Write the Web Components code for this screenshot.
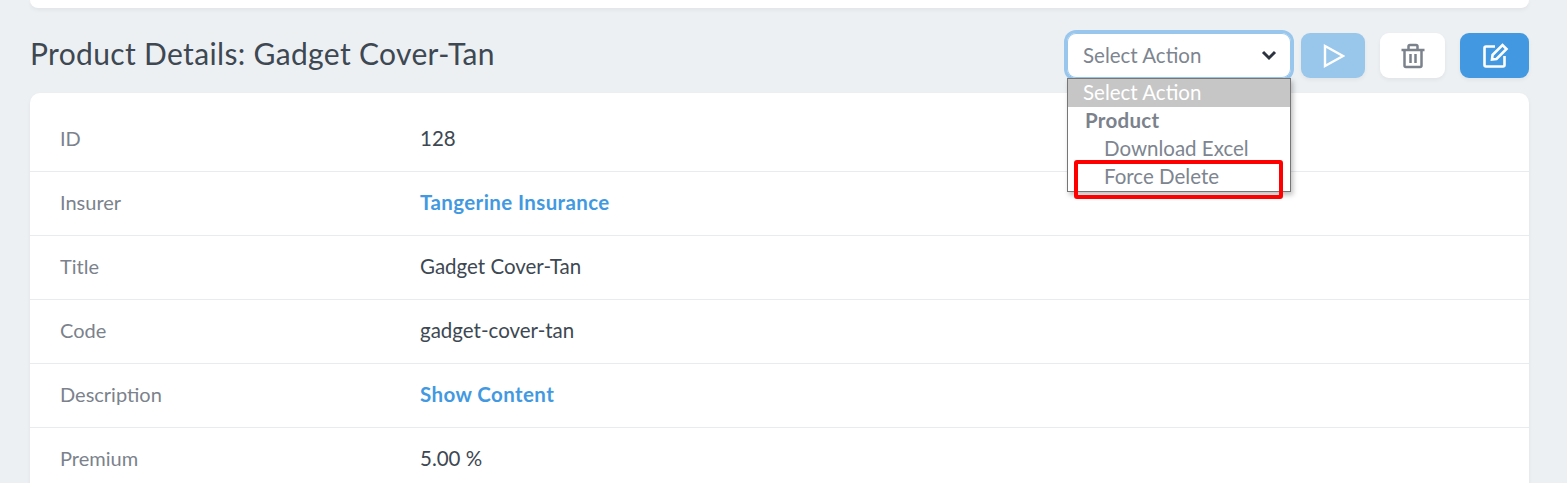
<!DOCTYPE html>
<html><head><meta charset="utf-8">
<style>
html,body{margin:0;height:483px;overflow:hidden;background:#edf0f3;}
body{font-family:Lato,"Noto Sans",sans-serif;font-size:20px;color:#3d4852;}
</style></head>
<body>
<template id="t-page"><style>
:host{display:block;padding:0 38px 0 30px;}
.top{height:8px;background:#fff;border-radius:0 0 10px 10px;box-shadow:0 2px 4px rgba(0,0,0,.05);}
</style><div class="top"></div><slot></slot></template>

<template id="t-head"><style>
:host{display:flex;justify-content:space-between;align-items:flex-start;height:85px;}
h1{margin:0;font-weight:400;font-size:30px;line-height:36px;color:#3d4852;letter-spacing:.34px;padding-top:27px;}
.acts{display:flex;align-items:flex-start;padding-top:25px;height:45px;}
</style><h1><slot name="title"></slot></h1><div class="acts"><slot></slot></div></template>

<template id="t-select"><style>
:host{display:block;position:relative;width:224px;height:45px;margin-right:10px;}
.box{box-sizing:border-box;height:45px;width:224px;background:#fff;border-radius:9px;box-shadow:0 0 0 3px #98c6ec,inset 0 0 0 1px #98c6ec;display:flex;align-items:center;justify-content:space-between;padding:0 14px 2px 16px;font-size:20.500px;color:#7d8590;}
.list{position:absolute;left:0;top:45px;width:224px;box-sizing:border-box;border:1px solid #767676;background:#fff;box-shadow:2px 3px 5px rgba(0,0,0,.25);font-size:20.500px;color:#7d8590;line-height:28px;z-index:2;}
.o{height:28px;padding-left:15px;white-space:nowrap;line-height:26px;}
.sel{background:#c6c6c6;color:#fff;}
.g{font-weight:700;padding-left:17px;color:#7b828c;letter-spacing:.3px;}
.i{padding-left:36px;}
.mark{position:absolute;left:7px;top:127px;width:209px;height:39px;box-sizing:border-box;border:4px solid #f00;border-radius:3px;z-index:3;}
</style><div class="box"><span>Select Action</span>
<svg width="16" height="12" viewBox="0 0 16 12"><path d="M2 3 8 9l6-6" fill="none" stroke="#2d3440" stroke-width="3"/></svg></div>
<div class="list"><div class="o sel">Select Action</div><div class="o g">Product</div><div class="o i">Download Excel</div><div class="o i">Force Delete</div></div>
<div class="mark"></div></template>

<template id="t-btn"><style>
:host{display:flex;align-items:center;justify-content:center;height:45px;border-radius:9px;box-shadow:0 2px 4px rgba(0,0,0,.05);}
:host([kind=play]){width:64px;background:#99c7ec;margin-right:15px;}
:host([kind=del]){width:65px;background:#fff;margin-right:15px;}
:host([kind=edit]){width:69px;background:#4299e1;}
svg{display:block;}
</style><slot></slot></template>

<template id="t-card"><style>
:host{display:block;background:#fff;border-radius:10px;padding-top:15px;box-shadow:0 2px 4px rgba(0,0,0,.05);}
</style><slot></slot></template>

<template id="t-row"><style>
:host{display:grid;grid-template-columns:360px 1fr;align-items:center;height:64px;box-sizing:border-box;padding:0 30px 3px 30px;border-bottom:1px solid #e9ecef;font-size:20.500px;}
.k{color:#7b828c;font-size:20px;}
.v{color:#3d4852;}
:host([link]) .v{color:#4299e1;font-weight:700;letter-spacing:.4px;}
</style><div class="k"><slot name="k"></slot></div><div class="v"><slot></slot></div></template>

<script>
for (const [n,id] of [['p-page','t-page'],['p-head','t-head'],['p-select','t-select'],['p-btn','t-btn'],['p-card','t-card'],['p-row','t-row']]) {
  customElements.define(n, class extends HTMLElement {
    constructor(){super();this.attachShadow({mode:'open'}).appendChild(document.getElementById(id).content.cloneNode(true));}
  });
}
</script>

<p-page>
  <p-head>
    <span slot="title">Product Details: Gadget Cover-Tan</span>
    <p-select></p-select>
    <p-btn kind="play"><svg width="24" height="26" viewBox="0 0 24 26" style="margin-top:1px"><path d="M4 3v20L22 13z" fill="none" stroke="#fff" stroke-width="2.400"/></svg></p-btn>
    <p-btn kind="del"><svg width="26" height="26" viewBox="0 0 26 26" fill="none" stroke="#7b828c" stroke-width="2.500"><path d="M1.500 7h23M4.500 7v15.500a1.500 1.500 0 0 0 1.500 1.500h14a1.500 1.500 0 0 0 1.500-1.500V7M8.500 7V3.500A1.500 1.500 0 0 1 10 2h6a1.500 1.500 0 0 1 1.500 1.500V7M10.500 11v9M15.500 11v9"/></svg></p-btn>
    <p-btn kind="edit"><svg width="26" height="26" viewBox="0 0 26 26" fill="none" stroke="#fff" stroke-width="2.600" style="margin:-2px 0 0 3px"><path d="M12 4.500H3A1.500 1.500 0 0 0 1.500 6v17A1.500 1.500 0 0 0 3 24.500h17a1.500 1.500 0 0 0 1.500-1.500v-9"/><path d="M9.500 13 19.500 3l4 4-10 10-4.500.500z"/></svg></p-btn>
  </p-head>
  <p-card>
    <p-row><span slot="k">ID</span>128</p-row>
    <p-row link><span slot="k">Insurer</span>Tangerine Insurance</p-row>
    <p-row><span slot="k">Title</span>Gadget Cover-Tan</p-row>
    <p-row><span slot="k">Code</span>gadget-cover-tan</p-row>
    <p-row link><span slot="k">Description</span>Show Content</p-row>
    <p-row><span slot="k">Premium</span>5.00 %</p-row>
  </p-card>
</p-page>
</body></html>
